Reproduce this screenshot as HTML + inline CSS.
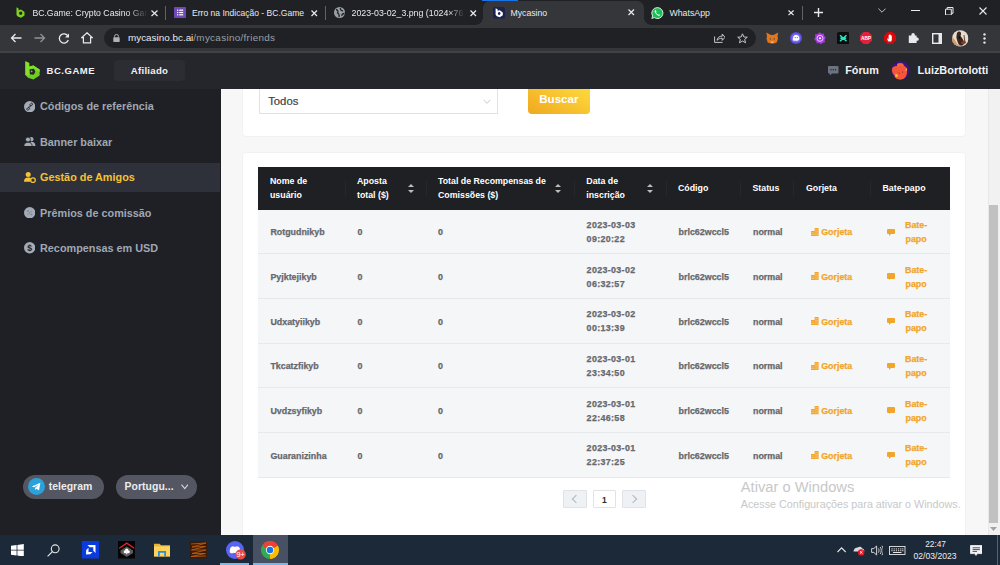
<!DOCTYPE html>
<html><head><meta charset="utf-8">
<style>
*{box-sizing:border-box;margin:0;padding:0}
html,body{width:1000px;height:565px;overflow:hidden;background:#f7f7f7;font-family:"Liberation Sans",sans-serif}
.abs{position:absolute}
.t{white-space:nowrap;position:absolute}
.card{position:absolute;background:#fff;border-radius:4px;border:1px solid #f1f1f1}
#sel{left:258.7px;top:70px;width:239.5px;height:43.5px;border:1px solid #e2e2e2;background:#fff}
#sel .tx{left:8.5px;top:22.6px;font-size:11.3px;color:#3b3f49;line-height:14px;-webkit-text-stroke:0.2px #3b3f49}
#btn{left:528px;top:70px;width:62.2px;height:43.8px;border-radius:4px;background:linear-gradient(30deg,#f0a81f 0%,#fbcf37 60%,#ffe14b 100%)}
#btn .tx{left:11.2px;top:22.4px;font-size:11.6px;font-weight:700;color:#fff;line-height:14px}
#thd{left:258px;top:167.3px;width:691.6px;height:42.3px;background:#1f2024}
#thd .h{position:absolute;color:#fff;font-size:8.8px;font-weight:700;line-height:14px;white-space:nowrap}
#thd .sep{position:absolute;top:14px;width:1px;height:14.5px;background:#27282d}
.sort{position:absolute;top:16.7px;width:6px;height:9.5px}
.sort:before{content:"";position:absolute;left:0;top:0;border-left:3px solid transparent;border-right:3px solid transparent;border-bottom:3.6px solid #bdbdbd}
.sort:after{content:"";position:absolute;left:0;top:5.6px;border-left:3px solid transparent;border-right:3px solid transparent;border-top:3.8px solid #bdbdbd}
.row{position:absolute;left:258px;width:691.6px;height:44.68px;background:#f5f6f8;border-bottom:1px solid #e8e9ed}
.row .c{position:absolute;top:15.7px;font-size:8.9px;font-weight:700;color:#66686d;line-height:14px;white-space:nowrap;-webkit-text-stroke:0.25px currentColor}
.row .nm{left:12.4px}
.row .z1{left:99.4px}
.row .z2{left:180px}
.row .dt{left:328.6px;top:8.3px;letter-spacing:0.35px}
.row .cd{left:420.6px}
.row .st{left:495px}
.row .gj{left:553px;color:#f2a52b}
.row .bp{left:629.4px;top:8.3px;color:#f2a52b}
.gi{display:inline-block;position:relative;width:7.6px;height:8.2px;margin-right:2.6px;vertical-align:-0.5px}
.bi{position:absolute;left:0;top:10.7px;width:7.6px;height:5.4px;background:#f2a52b;border-radius:1px}
.bi:after{content:"";position:absolute;left:1.4px;top:5.2px;border-left:2px solid #f2a52b;border-right:2px solid transparent;border-bottom:2px solid transparent}
.bp b{position:absolute;left:16.2px;top:0;text-align:center;font-weight:700;width:25px}
.pg{position:absolute;top:490.2px;width:23.5px;height:17.6px;border:1px solid #dfe3e8;border-radius:1px;background:#eef2f5}
.pg.cur{background:#fff;border-color:#e3e3e3}
.pg .ch{position:absolute;left:8.5px;top:5px;width:6px;height:6px;border-left:1px solid #b2b7bd;border-bottom:1px solid #b2b7bd;transform:rotate(45deg)}
.pg .ch.r{transform:rotate(-135deg);left:6.5px}
.wm1{left:740.8px;top:478px;font-size:14.7px;color:#c8c8c8;line-height:18px}
.wm2{left:740.8px;top:496.6px;font-size:10.75px;color:#c8c8c8;line-height:14px}
</style></head><body>

<div class="card" style="left:242px;top:40px;width:723.6px;height:96.6px"></div>
<div id="sel" class="abs"><span class="t tx">Todos</span>
<svg class="abs" style="left:223.5px;top:27.5px" width="8" height="6" viewBox="0 0 8 6"><path d="M0.6 0.8 L4 4.4 L7.4 0.8" fill="none" stroke="#c9c9c9" stroke-width="1"/></svg></div>
<div id="btn" class="abs"><span class="t tx">Buscar</span></div>
<div class="card" style="left:242px;top:151.9px;width:723.6px;height:420px"></div>
<div id="thd" class="abs">
<span class="h" style="left:12px;top:6.8px">Nome de<br>usuário</span>
<span class="sep" style="left:87px"></span>
<span class="h" style="left:99px;top:6.8px">Aposta<br>total ($)</span>
<span class="sort" style="left:149.6px"></span>
<span class="sep" style="left:168px"></span>
<span class="h" style="left:180px;top:6.8px">Total de Recompensas de<br>Comissões ($)</span>
<span class="sort" style="left:297px"></span>
<span class="sep" style="left:316px"></span>
<span class="h" style="left:328.3px;top:6.8px">Data de<br>inscrição</span>
<span class="sort" style="left:389px"></span>
<span class="sep" style="left:408px"></span>
<span class="h" style="left:420px;top:14px">Código</span>
<span class="sep" style="left:482px"></span>
<span class="h" style="left:494.5px;top:14px">Status</span>
<span class="sep" style="left:535px"></span>
<span class="h" style="left:548px;top:14px">Gorjeta</span>
<span class="sep" style="left:612px"></span>
<span class="h" style="left:624.5px;top:14px">Bate-papo</span>
</div>
<div class="row" style="top:209.60px"><span class="c nm">Rotgudnikyb</span><span class="c z1">0</span><span class="c z2">0</span><span class="c dt">2023-03-03<br>09:20:22</span><span class="c cd">brlc62wccl5</span><span class="c st">normal</span><span class="c gj"><svg class="gi" width="7.6" height="8.2" viewBox="0 0 7.6 8.2"><path d="M0 3 H4 V8.2 H0 Z M3.6 0 H7.6 V8.2 H3.6 Z" fill="#f2a52b"/><path d="M0 4.8 H3.6 M0 6.5 H3.6 M4 1.7 H7.6 M4 3.4 H7.6 M4 5.1 H7.6 M4 6.8 H7.6" stroke="#f9d9a6" stroke-width="0.5"/></svg>Gorjeta</span><span class="c bp"><i class="bi"></i><b>Bate-<br>papo</b></span></div>
<div class="row" style="top:254.28px"><span class="c nm">Pyjktejikyb</span><span class="c z1">0</span><span class="c z2">0</span><span class="c dt">2023-03-02<br>06:32:57</span><span class="c cd">brlc62wccl5</span><span class="c st">normal</span><span class="c gj"><svg class="gi" width="7.6" height="8.2" viewBox="0 0 7.6 8.2"><path d="M0 3 H4 V8.2 H0 Z M3.6 0 H7.6 V8.2 H3.6 Z" fill="#f2a52b"/><path d="M0 4.8 H3.6 M0 6.5 H3.6 M4 1.7 H7.6 M4 3.4 H7.6 M4 5.1 H7.6 M4 6.8 H7.6" stroke="#f9d9a6" stroke-width="0.5"/></svg>Gorjeta</span><span class="c bp"><i class="bi"></i><b>Bate-<br>papo</b></span></div>
<div class="row" style="top:298.96px"><span class="c nm">Udxatyiikyb</span><span class="c z1">0</span><span class="c z2">0</span><span class="c dt">2023-03-02<br>00:13:39</span><span class="c cd">brlc62wccl5</span><span class="c st">normal</span><span class="c gj"><svg class="gi" width="7.6" height="8.2" viewBox="0 0 7.6 8.2"><path d="M0 3 H4 V8.2 H0 Z M3.6 0 H7.6 V8.2 H3.6 Z" fill="#f2a52b"/><path d="M0 4.8 H3.6 M0 6.5 H3.6 M4 1.7 H7.6 M4 3.4 H7.6 M4 5.1 H7.6 M4 6.8 H7.6" stroke="#f9d9a6" stroke-width="0.5"/></svg>Gorjeta</span><span class="c bp"><i class="bi"></i><b>Bate-<br>papo</b></span></div>
<div class="row" style="top:343.64px"><span class="c nm">Tkcatzfikyb</span><span class="c z1">0</span><span class="c z2">0</span><span class="c dt">2023-03-01<br>23:34:50</span><span class="c cd">brlc62wccl5</span><span class="c st">normal</span><span class="c gj"><svg class="gi" width="7.6" height="8.2" viewBox="0 0 7.6 8.2"><path d="M0 3 H4 V8.2 H0 Z M3.6 0 H7.6 V8.2 H3.6 Z" fill="#f2a52b"/><path d="M0 4.8 H3.6 M0 6.5 H3.6 M4 1.7 H7.6 M4 3.4 H7.6 M4 5.1 H7.6 M4 6.8 H7.6" stroke="#f9d9a6" stroke-width="0.5"/></svg>Gorjeta</span><span class="c bp"><i class="bi"></i><b>Bate-<br>papo</b></span></div>
<div class="row" style="top:388.32px"><span class="c nm">Uvdzsyfikyb</span><span class="c z1">0</span><span class="c z2">0</span><span class="c dt">2023-03-01<br>22:46:58</span><span class="c cd">brlc62wccl5</span><span class="c st">normal</span><span class="c gj"><svg class="gi" width="7.6" height="8.2" viewBox="0 0 7.6 8.2"><path d="M0 3 H4 V8.2 H0 Z M3.6 0 H7.6 V8.2 H3.6 Z" fill="#f2a52b"/><path d="M0 4.8 H3.6 M0 6.5 H3.6 M4 1.7 H7.6 M4 3.4 H7.6 M4 5.1 H7.6 M4 6.8 H7.6" stroke="#f9d9a6" stroke-width="0.5"/></svg>Gorjeta</span><span class="c bp"><i class="bi"></i><b>Bate-<br>papo</b></span></div>
<div class="row" style="top:433.00px"><span class="c nm">Guaranizinha</span><span class="c z1">0</span><span class="c z2">0</span><span class="c dt">2023-03-01<br>22:37:25</span><span class="c cd">brlc62wccl5</span><span class="c st">normal</span><span class="c gj"><svg class="gi" width="7.6" height="8.2" viewBox="0 0 7.6 8.2"><path d="M0 3 H4 V8.2 H0 Z M3.6 0 H7.6 V8.2 H3.6 Z" fill="#f2a52b"/><path d="M0 4.8 H3.6 M0 6.5 H3.6 M4 1.7 H7.6 M4 3.4 H7.6 M4 5.1 H7.6 M4 6.8 H7.6" stroke="#f9d9a6" stroke-width="0.5"/></svg>Gorjeta</span><span class="c bp"><i class="bi"></i><b>Bate-<br>papo</b></span></div>
<div class="pg" style="left:563.2px"><i class="ch"></i></div>
<div class="pg cur" style="left:592.6px"><span class="t" style="left:0;width:21.5px;text-align:center;top:1.5px;font-size:8.5px;font-weight:700;color:#2b2b2b;line-height:14px">1</span></div>
<div class="pg" style="left:622px"><i class="ch r"></i></div>
<span class="t wm1">Ativar o Windows</span>
<span class="t wm2">Acesse Configurações para ativar o Windows.</span>

<div class="abs" style="left:987.7px;top:88.5px;width:12.3px;height:447.5px;background:#f1f1f1;border-left:1px solid #e9e9e9"></div>
<div class="abs" style="left:989.2px;top:205px;width:9px;height:318px;background:#c1c1c1"></div>
<svg class="abs" style="left:990px;top:527px" width="7" height="4" viewBox="0 0 7 4"><path d="M0 0H7L3.5 4Z" fill="#a3a3a3"/></svg>
<div class="abs" style="left:0;top:0;width:1000px;height:25px;background:#202124"></div>
<div class="abs" style="left:483px;top:1px;width:160.5px;height:24.5px;background:#35363a;border-radius:7px 7px 0 0"></div>
<div class="abs" style="left:476px;top:18px;width:7px;height:7px;background:radial-gradient(circle at 0 0,#202124 6.5px,#35363a 7px)"></div>
<div class="abs" style="left:644px;top:18px;width:7px;height:7px;background:radial-gradient(circle at 100% 0,#202124 6.5px,#35363a 7px)"></div>
<div class="abs" style="left:482.4px;top:0;width:35.2px;height:1.3px;background:#1a73e8"></div>
<svg class="abs" style="left:16px;top:7px" width="9" height="11" viewBox="0 0 9 11"><path d="M0.5 0.3 L2.6 1.4 V3.3 L5 2.6 L8.5 5 V8.6 L5 10.7 L1.8 9.6 L0.5 8 Z" fill="#7ed321"/><path d="M3.2 5 L5.6 4.6 L6.4 6.6 L5.2 8 L3.3 7.6 Z" fill="#202124"/></svg>
<span class="t" style="left:32.40px;top:8.74px;font-size:8.7px;font-weight:400;color:#e8eaed;line-height:1;width:116px;padding-bottom:3px;overflow:hidden;-webkit-mask-image:linear-gradient(90deg,#000 82%,transparent)">BC.Game: Crypto Casino Gam</span>
<svg class="abs" style="left:151px;top:10px" width="7" height="6.5" viewBox="0 0 7 6.5"><path d="M0.5 0.5L6.5 6.0M6.5 0.5L0.5 6.0" stroke="#e8eaed" stroke-width="1.2" fill="none"/></svg>
<div class="abs" style="left:165.3px;top:5.5px;width:1px;height:14px;background:#5f6368"></div>
<svg class="abs" style="left:174px;top:7px" width="12" height="11" viewBox="0 0 12 11"><rect x="0" y="0" width="12" height="11" rx="1" fill="#7248b9"/><g fill="#fff"><rect x="3" y="2.6" width="1.3" height="1.2"/><rect x="5.2" y="2.6" width="4" height="1.2"/><rect x="3" y="4.9" width="1.3" height="1.2"/><rect x="5.2" y="4.9" width="4" height="1.2"/><rect x="3" y="7.2" width="1.3" height="1.2"/><rect x="5.2" y="7.2" width="4" height="1.2"/></g></svg>
<span class="t" style="left:192.00px;top:8.86px;font-size:8.55px;font-weight:400;color:#e8eaed;line-height:1;">Erro na Indicação - BC.Game</span>
<svg class="abs" style="left:311px;top:10px" width="6.5" height="6.5" viewBox="0 0 6.5 6.5"><path d="M0.5 0.5L6.0 6.0M6.0 0.5L0.5 6.0" stroke="#e8eaed" stroke-width="1.2" fill="none"/></svg>
<div class="abs" style="left:325px;top:5.5px;width:1px;height:14px;background:#5f6368"></div>
<svg class="abs" style="left:334px;top:7.2px" width="11" height="11" viewBox="0 0 11 11"><circle cx="5.5" cy="5.5" r="5.5" fill="#9aa0a6"/><path d="M2 2.5 C4 3 4.5 4.5 3.5 6 C5 6.5 5.5 7.5 5 10 M6.5 1 C6 2.5 7 3.5 9 4 M8 9 C7.5 7.5 8.5 6.5 10.5 6.5" stroke="#202124" stroke-width="1.3" fill="none"/></svg>
<span class="t" style="left:351.50px;top:8.65px;font-size:8.8px;font-weight:400;color:#e8eaed;line-height:1;width:113px;padding-bottom:3px;overflow:hidden;-webkit-mask-image:linear-gradient(90deg,#000 85%,transparent)">2023-03-02_3.png (1024×76</span>
<svg class="abs" style="left:470px;top:10px" width="6.5" height="6.5" viewBox="0 0 6.5 6.5"><path d="M0.5 0.5L6.0 6.0M6.0 0.5L0.5 6.0" stroke="#e8eaed" stroke-width="1.2" fill="none"/></svg>
<svg class="abs" style="left:492.5px;top:7px" width="12" height="11.5" viewBox="0 0 12 11.5"><rect width="12" height="11.5" rx="1.5" fill="#1b2250"/><path d="M2.6 1.2 L4.6 2.2 V3.8 L6.8 3.3 L9.8 5.4 V8.3 L6.8 10.2 L3.8 9.3 L2.6 7.8 Z" fill="#fff"/><path d="M4.9 5.4 L7 5.1 L7.6 6.8 L6.6 8 L5 7.6 Z" fill="#1b2250"/></svg>
<span class="t" style="left:510.50px;top:8.74px;font-size:8.7px;font-weight:400;color:#e8eaed;line-height:1;">Mycasino</span>
<svg class="abs" style="left:628.3px;top:9.4px" width="6.5" height="6.5" viewBox="0 0 6.5 6.5"><path d="M0.5 0.5L6.0 6.0M6.0 0.5L0.5 6.0" stroke="#e8eaed" stroke-width="1.2" fill="none"/></svg>
<svg class="abs" style="left:651px;top:7px" width="12.5" height="12" viewBox="0 0 12.5 12"><path d="M6.3 0.6 A5.5 5.5 0 1 1 3.3 10.6 L0.8 11.4 L1.6 9 A5.5 5.5 0 0 1 6.3 0.6 Z" fill="#1fbf58" stroke="#f0f0f0" stroke-width="0.9"/><path d="M4.2 3.2 C3.6 3.6 3.4 4.4 4 5.6 C4.8 7.2 6.2 8.4 7.6 8.8 C8.5 9 9 8.6 9.2 8 L8 7.2 L7.3 7.8 C6.4 7.4 5.4 6.5 5 5.6 L5.5 4.9 L4.9 3.3 Z" fill="#fff"/></svg>
<span class="t" style="left:669.40px;top:8.65px;font-size:8.8px;font-weight:400;color:#e8eaed;line-height:1;">WhatsApp</span>
<svg class="abs" style="left:787.5px;top:10.2px" width="6.100000000000023" height="5.600000000000001" viewBox="0 0 6.100000000000023 5.600000000000001"><path d="M0.5 0.5L5.600000000000023 5.100000000000001M5.600000000000023 0.5L0.5 5.100000000000001" stroke="#e8eaed" stroke-width="1.2" fill="none"/></svg>
<div class="abs" style="left:801.5px;top:6px;width:1px;height:14px;background:#5f6368"></div>
<svg class="abs" style="left:814px;top:8.4px" width="9" height="9" viewBox="0 0 9 9"><path d="M4.5 0V9M0 4.5H9" stroke="#e8eaed" stroke-width="1.4"/></svg>
<svg class="abs" style="left:877.5px;top:8px" width="8" height="5" viewBox="0 0 8 5"><path d="M0.4 0.6L4 4.2L7.6 0.6" stroke="#bdc1c6" stroke-width="1" fill="none"/></svg>
<div class="abs" style="left:911px;top:10px;width:8.5px;height:1px;background:#e8eaed"></div>
<svg class="abs" style="left:945px;top:6.5px" width="8.5" height="8.5" viewBox="0 0 8.5 8.5"><path d="M2.2 2.2 V0.5 H8 V6.3 H6.3 M0.5 2.2 H6.3 V8 H0.5 Z" stroke="#e8eaed" stroke-width="1" fill="none"/></svg>
<svg class="abs" style="left:979px;top:6.5px" width="8" height="8.0" viewBox="0 0 8 8.0"><path d="M0.5 0.5L7.5 7.5M7.5 0.5L0.5 7.5" stroke="#e8eaed" stroke-width="1.1" fill="none"/></svg>
<div class="abs" style="left:0;top:25px;width:1000px;height:26px;background:#35363a"></div>
<div class="abs" style="left:0;top:50.8px;width:1000px;height:2.1px;background:#414246"></div>
<svg class="abs" style="left:10px;top:33px" width="12" height="10" viewBox="0 0 12 10"><path d="M11.5 5H1.5M5.5 1L1.5 5L5.5 9" stroke="#e8eaed" stroke-width="1.3" fill="none"/></svg>
<svg class="abs" style="left:33.5px;top:33px" width="12" height="10" viewBox="0 0 12 10"><path d="M0.5 5H10.5M6.5 1L10.5 5L6.5 9" stroke="#909396" stroke-width="1.3" fill="none"/></svg>
<svg class="abs" style="left:57.5px;top:32.5px" width="12" height="11" viewBox="0 0 12 11"><path d="M10 3.2 A4.6 4.6 0 1 0 10.3 7" stroke="#e8eaed" stroke-width="1.3" fill="none"/><path d="M11 0.6 V4.6 H7 Z" fill="#e8eaed"/></svg>
<svg class="abs" style="left:80.5px;top:32px" width="12" height="11.5" viewBox="0 0 12 11.5"><path d="M6 0.8 L11.2 5.6 H9.6 V10.8 H2.4 V5.6 H0.8 Z" stroke="#e8eaed" stroke-width="1.2" fill="none" stroke-linejoin="miter"/></svg>
<div class="abs" style="left:103.5px;top:27.8px;width:652px;height:20.2px;background:#202124;border-radius:10.1px"></div>
<svg class="abs" style="left:113px;top:33.5px" width="7" height="8" viewBox="0 0 7 8"><path d="M1.6 3.4 V2.3 A1.9 1.9 0 0 1 5.4 2.3 V3.4" stroke="#aeb1b5" stroke-width="1" fill="none"/><rect x="0.3" y="3.3" width="6.4" height="4.6" rx="0.6" fill="#aeb1b5"/></svg>
<span class="t" style="left:128.00px;top:33.42px;font-size:9.9px;font-weight:400;color:#e8eaed;line-height:1;">mycasino.bc.ai<span style="color:#9aa0a6;letter-spacing:0.3px">/mycasino/friends</span></span>
<svg class="abs" style="left:713.5px;top:33px" width="11.5" height="10" viewBox="0 0 11.5 10"><path d="M0.6 3.5 V9.4 H8.5 M3 7.3 C3.3 4.5 5.5 3.2 8.2 3.2 V1 L11 4.3 L8.2 7.4 V5.2 C6 5.2 4.3 6 3 7.3 Z" stroke="#c4c7ca" stroke-width="1" fill="none" stroke-linejoin="round"/></svg>
<svg class="abs" style="left:737px;top:32.5px" width="11" height="11" viewBox="0 0 11 11"><path d="M5.5 0.8 L6.9 4 L10.3 4.2 L7.7 6.4 L8.5 9.8 L5.5 8 L2.5 9.8 L3.3 6.4 L0.7 4.2 L4.1 4 Z" stroke="#c4c7c5" stroke-width="1" fill="none" stroke-linejoin="round"/></svg>
<svg class="abs" style="left:766px;top:32px" width="12.5" height="12" viewBox="0 0 12.5 12"><path d="M0.3 0.5 L5 3 H7.5 L12.2 0.5 L11.5 4.5 L12 6.5 L10.8 10.5 L7.8 11.5 H4.7 L1.7 10.5 L0.5 6.5 L1 4.5 Z" fill="#e2761b"/><path d="M3.5 6 L5.2 7 L4.4 7.8 Z M9 6 L7.3 7 L8.1 7.8 Z" fill="#233447"/><path d="M4.8 9.6 H7.7 L7.2 11 H5.3 Z" fill="#d7c1b3"/></svg>
<svg class="abs" style="left:789.5px;top:32.2px" width="12" height="12" viewBox="0 0 12 12"><circle cx="6" cy="6" r="6" fill="#5b4be0"/><circle cx="6" cy="6" r="4.6" fill="#7c6cf2"/><path d="M2.8 8.4 C2.8 4.5 3.8 3 6 3 C8.2 3 9.4 4.5 9.4 6.5 C9.4 8 8.2 8.8 6 8.8 Z" fill="#fff"/><circle cx="5.2" cy="5.6" r="0.6" fill="#5b4be0"/><circle cx="7.3" cy="5.6" r="0.6" fill="#5b4be0"/></svg>
<svg class="abs" style="left:813.5px;top:32px" width="12" height="12.5" viewBox="0 0 12 12.5"><path d="M6 0.3 L7.4 1.8 L9.8 1.6 L10.2 3.8 L11.8 5.8 L10.6 7.8 L11 10.2 L8.8 10.8 L7 12.3 L5.2 11 L2.8 11.2 L2 9 L0.2 7.2 L1.4 5 L1 2.6 L3.4 2 Z" fill="#a53ce0"/><circle cx="6" cy="6.3" r="3" fill="none" stroke="#e9c7ff" stroke-width="1"/><circle cx="6" cy="6.3" r="1" fill="#fff"/></svg>
<svg class="abs" style="left:836.8px;top:31.8px" width="12.5" height="12.5" viewBox="0 0 12.5 12.5"><rect width="12.5" height="12.5" rx="2" fill="#0d0d0d"/><path d="M3 3.2 L6.25 6.25 L3 9.3 M9.5 3.2 L6.25 6.25 L9.5 9.3 M3.3 6.25 H9.2" stroke="#2ce1c4" stroke-width="1.5" fill="none"/></svg>
<svg class="abs" style="left:860.2px;top:32.2px" width="12" height="12" viewBox="0 0 12 12"><path d="M3.5 0 H8.5 L12 3.5 V8.5 L8.5 12 H3.5 L0 8.5 V3.5 Z" fill="#e41f3a"/><text x="6" y="8" font-family="Liberation Sans" font-size="4.8" font-weight="700" fill="#fff" text-anchor="middle">ABP</text></svg>
<svg class="abs" style="left:883.7px;top:32.2px" width="12" height="12" viewBox="0 0 12 12"><path d="M3.5 0 H8.5 L12 3.5 V8.5 L8.5 12 H3.5 L0 8.5 V3.5 Z" fill="#d60a0a"/><path d="M4.4 9.4 C3.6 8.4 3.2 7.2 3.4 6.4 L3.9 6.3 L4.6 7.2 V3.4 C4.6 3 5.4 3 5.4 3.4 V2.5 C5.4 2.1 6.2 2.1 6.2 2.5 V3 C6.2 2.6 7 2.6 7 3 V3.7 C7 3.3 7.8 3.3 7.8 3.7 V7.4 C7.8 8.4 7.4 9 7 9.4 Z" fill="#fff"/></svg>
<svg class="abs" style="left:907.7px;top:32.2px" width="11.5" height="11.5" viewBox="0 0 11.5 11.5"><path d="M0.8 3.6 H3.4 V2.6 A1.7 1.7 0 0 1 6.8 2.6 V3.6 H8.6 V5.6 H9.2 A1.6 1.6 0 0 1 9.2 8.8 H8.6 V11 H0.8 Z" fill="#e8eaed"/></svg>
<svg class="abs" style="left:931.7px;top:32.5px" width="10.5" height="11" viewBox="0 0 10.5 11"><rect x="0.7" y="0.7" width="9.1" height="9.6" fill="none" stroke="#e8eaed" stroke-width="1.4"/><rect x="6.5" y="0.7" width="3.3" height="9.6" fill="#e8eaed"/></svg>
<svg class="abs" style="left:952px;top:30px" width="16.5" height="17" viewBox="0 0 16.5 17"><defs><clipPath id="pa"><circle cx="8.25" cy="8.4" r="8.2"/></clipPath></defs><g clip-path="url(#pa)"><rect width="16.5" height="17" fill="#e9ddd0"/><path d="M0 7 C2 8 3 10 4 12 C5 14 6 15 8 15 L6 17 H0 Z" fill="#d29a66"/><path d="M5 3 C5.5 1.5 7.5 1 8.5 2 C9.5 3 9 5 8.5 6 C9.5 7 11 9 12.5 13 C12 15 10 16 8 15.5 C6.5 14.5 5.5 12 5 10 C4 8 4.5 5 5 3 Z" fill="#3a2820"/><path d="M6.5 6.5 C7.5 6 8.5 7 8.2 8 L7 9 Z" fill="#0f0b0a"/><path d="M11.5 5 L12.5 5 L13.5 13 L12.5 14 Z" fill="#6b4a38"/><path d="M9 12 L13 10.5 L14 13 L10 14.5 Z" fill="#8a3a22"/></g></svg>
<svg class="abs" style="left:982.5px;top:33px" width="3" height="11" viewBox="0 0 3 11"><circle cx="1.5" cy="1.4" r="1.2" fill="#e8eaed"/><circle cx="1.5" cy="5.5" r="1.2" fill="#e8eaed"/><circle cx="1.5" cy="9.6" r="1.2" fill="#e8eaed"/></svg>
<div class="abs" style="left:0;top:52.9px;width:1000px;height:36.1px;background:#24262b"></div>
<svg class="abs" style="left:24.8px;top:60.8px" width="15" height="19" viewBox="0 0 15 19"><path d="M0.4 0.2 L4.2 2 V5.4 L8.4 4.6 L14.6 8.4 V14.6 L8.4 18.6 L3 16.8 L0.4 14 Z" fill="#6fcf1f"/><path d="M0.4 0.2 L4.2 2 V5.4 L8.4 4.6 L14.6 8.4 V11 L8 7.2 L4.2 8 V14.6 L0.4 14 Z" fill="#83e02b"/><path d="M4.6 8.6 L9 7.8 L10.4 11 L8.6 13.8 L5 13.2 Z" fill="#24262b"/><circle cx="6.6" cy="10.4" r="0.9" fill="#6fcf1f"/></svg>
<span class="t" style="left:46.50px;top:65.86px;font-size:9.5px;font-weight:700;color:#f2f2f2;line-height:1;letter-spacing:0.55px">BC.GAME</span>
<div class="abs" style="left:113.6px;top:60px;width:71px;height:20.6px;background:#2b2d33;border-radius:4px"></div>
<span class="t" style="left:130.70px;top:66.47px;font-size:9.6px;font-weight:700;color:#f2f2f2;line-height:1;letter-spacing:0.3px">Afiliado</span>
<svg class="abs" style="left:828px;top:66px" width="10.5" height="10" viewBox="0 0 10.5 10"><path d="M0 0.8 C0 0.3 0.3 0 0.8 0 H9.7 C10.2 0 10.5 0.3 10.5 0.8 V6.6 C10.5 7.1 10.2 7.4 9.7 7.4 H4 L1.8 9.6 V7.4 H0.8 C0.3 7.4 0 7.1 0 6.6 Z" fill="#6c7380"/><g fill="#24262b"><circle cx="3" cy="3.7" r="0.7"/><circle cx="5.25" cy="3.7" r="0.7"/><circle cx="7.5" cy="3.7" r="0.7"/></g></svg>
<span class="t" style="left:845.20px;top:64.76px;font-size:10.8px;font-weight:700;color:#f2f2f2;line-height:1;">Fórum</span>
<svg class="abs" style="left:891.2px;top:61.2px" width="19" height="19" viewBox="0 0 19 19"><defs><clipPath id="av"><circle cx="9.5" cy="9.5" r="9.3"/></clipPath></defs><circle cx="9.5" cy="9.5" r="9.3" fill="#3b1583"/><g clip-path="url(#av)"><path d="M1 8 C1.5 5.5 4 4.8 6 5 C6 3 7.5 1.8 9 2.2 C10.5 1.6 12.5 2.5 12.5 4.5 C15 5.5 16.5 8 16 11 C16 14.5 14 18 10 19 C6 19.5 3.5 17.5 3.5 14.5 C2 13 0.6 10.5 1 8 Z" fill="#f4553b"/><circle cx="7.6" cy="4" r="1.6" fill="#f26a3f"/><circle cx="11" cy="4" r="1.6" fill="#f26a3f"/><path d="M4 13.5 C5 12.5 6.5 13 7 14.5 C6.8 16 5.2 16.6 4.3 15.6 Z" fill="#f6b928"/><path d="M15 6.5 L16.2 8.8 L14.5 10.5 Z" fill="#f6b928"/><circle cx="8.2" cy="12" r="0.6" fill="#7a2514"/><circle cx="11.6" cy="11" r="0.6" fill="#7a2514"/></g></svg>
<span class="t" style="left:917.60px;top:64.67px;font-size:10.9px;font-weight:700;color:#f2f2f2;line-height:1;">LuizBortolotti</span>
<div class="abs" style="left:0;top:88.5px;width:220.5px;height:447.5px;background:#1f2025"></div>
<div class="abs" style="left:0;top:162.5px;width:220px;height:29.3px;background:#2e3139"></div>
<svg class="abs" style="left:24px;top:100.8px" width="11.4" height="11.4" viewBox="0 0 11.4 11.4"><circle cx="5.7" cy="5.7" r="5.7" fill="#a3abb7"/><path d="M3.6 7.8 L7.8 3.6" stroke="#1f2025" stroke-width="0.9"/><rect x="5.6" y="2.6" width="3.2" height="2" rx="1" transform="rotate(-45 7.2 3.6)" fill="none" stroke="#1f2025" stroke-width="0.8"/><rect x="2.6" y="6.8" width="3.2" height="2" rx="1" transform="rotate(-45 4.2 7.8)" fill="none" stroke="#1f2025" stroke-width="0.8"/></svg>
<svg class="abs" style="left:24px;top:136.6px" width="11.5" height="9.6" viewBox="0 0 11.5 9.6"><circle cx="7.4" cy="2.2" r="2.1" fill="#a3abb7"/><path d="M5 9.6 C5 6.2 6.2 4.8 7.6 4.8 C9.8 4.8 11.5 6.2 11.5 9.6 Z" fill="#a3abb7"/><circle cx="4" cy="2.6" r="2.5" fill="#a3abb7" stroke="#1f2025" stroke-width="0.8"/><path d="M-0.2 9.8 C-0.2 6.6 1.4 5.2 4 5.2 C6.6 5.2 8.2 6.6 8.2 9.8 Z" fill="#a3abb7" stroke="#1f2025" stroke-width="0.8"/></svg>
<svg class="abs" style="left:24.2px;top:171.7px" width="12" height="11" viewBox="0 0 12 11"><circle cx="4.2" cy="2.6" r="2.5" fill="#f5c233"/><path d="M0 9.8 C0 6.8 1.6 5.6 4.2 5.6 C5.6 5.6 6.4 6 7 6.4 C6.4 7.2 6.3 8.6 6.8 9.8 Z" fill="#f5c233"/><circle cx="9" cy="8.2" r="2.3" fill="none" stroke="#f5c233" stroke-width="1.3"/></svg>
<svg class="abs" style="left:24px;top:207px" width="11.4" height="11.4" viewBox="0 0 11.4 11.4"><circle cx="5.7" cy="5.7" r="5.7" fill="#a3abb7"/><path d="M3.6 7.8 L7.8 3.6" stroke="#7d8590" stroke-width="1"/><circle cx="4" cy="4" r="0.9" fill="#7d8590"/><circle cx="7.4" cy="7.4" r="0.9" fill="#7d8590"/></svg>
<svg class="abs" style="left:24px;top:242.2px" width="11.4" height="11.4" viewBox="0 0 11.4 11.4"><circle cx="5.7" cy="5.7" r="5.7" fill="#a3abb7"/><text x="5.7" y="8.9" font-family="Liberation Sans" font-size="8.6" font-weight="700" fill="#1f2025" text-anchor="middle">$</text></svg>
<span class="t" style="left:40.00px;top:101.42px;font-size:10.85px;font-weight:700;color:#9fa7b3;line-height:1;">Códigos de referência</span>
<span class="t" style="left:40.00px;top:137.02px;font-size:10.85px;font-weight:700;color:#9fa7b3;line-height:1;">Banner baixar</span>
<span class="t" style="left:40.00px;top:171.82px;font-size:10.85px;font-weight:700;color:#f5c233;line-height:1;">Gestão de Amigos</span>
<span class="t" style="left:40.00px;top:207.52px;font-size:10.85px;font-weight:700;color:#9fa7b3;line-height:1;">Prêmios de comissão</span>
<span class="t" style="left:40.00px;top:242.82px;font-size:10.85px;font-weight:700;color:#9fa7b3;line-height:1;">Recompensas em USD</span>
<div class="abs" style="left:23.3px;top:475px;width:81.2px;height:23.8px;border-radius:12px;background:#545761"></div>
<svg class="abs" style="left:27.5px;top:478.4px" width="17" height="17" viewBox="0 0 17 17"><circle cx="8.5" cy="8.5" r="8.5" fill="#2aa1dc"/><path d="M3.8 8.4 L12.4 4.8 L11 12.4 L8.6 10.8 L7.2 12 L7.1 9.9 L10.8 6.4 L6.2 9.3 Z" fill="#fff"/></svg>
<span class="t" style="left:48.75px;top:481.75px;font-size:10.45px;font-weight:700;color:#ececec;line-height:1;">telegram</span>
<div class="abs" style="left:115.8px;top:475px;width:81.2px;height:23.8px;border-radius:12px;background:#545761"></div>
<span class="t" style="left:124.50px;top:481.75px;font-size:10.45px;font-weight:700;color:#ececec;line-height:1;letter-spacing:0.05px">Portugu...</span>
<svg class="abs" style="left:180.5px;top:484px" width="7.5" height="5.5" viewBox="0 0 7.5 5.5"><path d="M0.5 0.6L3.75 4.6L7 0.6" stroke="#d4d4d4" stroke-width="1.2" fill="none"/></svg>
<div class="abs" style="left:0;top:535px;width:1000px;height:30px;background:#1c2939"></div>
<svg class="abs" style="left:11.2px;top:543.8px" width="12.8" height="12.5" viewBox="0 0 12.8 12.5"><path d="M0 1.8 L5.6 1 V5.8 H0 Z M6.4 0.9 L12.8 0 V5.8 H6.4 Z M0 6.6 H5.6 V11.5 L0 10.7 Z M6.4 6.6 H12.8 V12.5 L6.4 11.6 Z" fill="#fff"/></svg>
<svg class="abs" style="left:46.5px;top:543.6px" width="13" height="13" viewBox="0 0 13 13"><circle cx="8.2" cy="4.8" r="3.9" fill="none" stroke="#e6e6e6" stroke-width="1.1"/><path d="M5.4 7.6 L0.6 12.4" stroke="#e6e6e6" stroke-width="1.2"/></svg>
<svg class="abs" style="left:81.7px;top:541.2px" width="17.5" height="17.5" viewBox="0 0 17.5 17.5"><rect width="17.5" height="17.5" fill="#0a3be0"/><path d="M5.5 4 H13.5 V12 L11.3 9.8 V6.2 H7.7 Z M4 13.5 L4.2 9 L6.5 6.7 V11 H10.6 L8.3 13.3 Z" fill="#fff"/></svg>
<svg class="abs" style="left:117.7px;top:541.2px" width="17.5" height="17.5" viewBox="0 0 17.5 17.5"><rect width="17.5" height="17.5" fill="#050505"/><path d="M1.2 6.4 L8.75 1.2 L16.3 6.4 V8 L8.75 3 L1.2 8 Z" fill="#e3202b"/><path d="M2.5 9.5 L8.75 5.6 L15 9.5 L15 12 L8.75 16 L2.5 12 Z" fill="#5b5b5b"/><circle cx="8.75" cy="9" r="1.6" fill="#fff"/><circle cx="7.2" cy="10.8" r="1.5" fill="#fff"/><circle cx="10.3" cy="10.8" r="1.5" fill="#fff"/><rect x="8.2" y="10.5" width="1.1" height="2.8" fill="#fff"/></svg>
<svg class="abs" style="left:154.2px;top:543px" width="16" height="14" viewBox="0 0 16 14"><path d="M0 0.8 H5.6 L7 2.2 H16 V13.4 H0 Z" fill="#e8b43a"/><rect x="0" y="3.4" width="16" height="10" fill="#ffd35c"/><path d="M4 8 H12 V13.4 H10.2 V9.8 H5.8 V13.4 H4 Z" fill="#2a8ce0"/></svg>
<svg class="abs" style="left:190.2px;top:541.2px" width="17.3" height="17.5" viewBox="0 0 17.3 17.5"><rect width="17.3" height="17.5" rx="1.5" fill="#3a1a08"/><path d="M1 3 L16 2 L2 6 L15.5 5.5 L1.5 9 L16 9 L2 12.5 L15.5 12.5 L1 15.5 L16 15" stroke="#c8620f" stroke-width="0.8" fill="none"/></svg>
<svg class="abs" style="left:225.5px;top:541.4px" width="22" height="19" viewBox="0 0 22 19"><circle cx="9" cy="9" r="9" fill="#5865f2"/><path d="M4.8 6.2 C5.6 5.6 6.6 5.3 7.4 5.2 L7.7 5.8 C8.6 5.7 9.4 5.7 10.3 5.8 L10.6 5.2 C11.4 5.3 12.4 5.6 13.2 6.2 C14.2 7.8 14.4 9.6 14.2 11.4 C13.4 12 12.5 12.4 11.6 12.6 L11 11.8 C9.7 12.2 8.3 12.2 7 11.8 L6.4 12.6 C5.5 12.4 4.6 12 3.8 11.4 C3.6 9.6 3.8 7.8 4.8 6.2 Z" fill="#fff"/><circle cx="14.6" cy="13.4" r="5.2" fill="#e84a4a"/><text x="14.5" y="16.1" font-family="Liberation Sans" font-size="7.2" fill="#fff" text-anchor="middle">9+</text></svg>
<div class="abs" style="left:220.2px;top:563.4px;width:28.5px;height:1.6px;background:#76b9ed"></div>
<div class="abs" style="left:253px;top:535px;width:35.2px;height:30px;background:#475163"></div>
<div class="abs" style="left:253px;top:563.4px;width:35.2px;height:1.6px;background:#76b9ed"></div>
<svg class="abs" style="left:261.3px;top:541.1px" width="18" height="18" viewBox="-1 -1 2 2"><path d="M0 0 L0 -1 A1 1 0 0 1 0.866 0.5 Z" fill="#ea4335" transform="rotate(-60)"/><path d="M0 0 L0.866 -0.5 A1 1 0 0 1 0 1 Z" fill="#fbbc04" transform="rotate(0)"/><path d="M0 0 L0 1 A1 1 0 0 1 -0.866 -0.5 Z" fill="#34a853"/><path d="M0 0 L-0.866 -0.5 A1 1 0 0 1 0.866 -0.5 Z" fill="#ea4335"/><circle r="0.46" fill="#fff"/><circle r="0.36" fill="#1a73e8"/></svg>
<svg class="abs" style="left:837.2px;top:547px" width="9.2" height="5.5" viewBox="0 0 9.2 5.5"><path d="M0.5 5 L4.6 0.8 L8.7 5" stroke="#e6e6e6" stroke-width="1.1" fill="none"/></svg>
<svg class="abs" style="left:853.3px;top:545px" width="12" height="11" viewBox="0 0 12 11"><path d="M0.5 6.5 C0.5 4 2.5 2.4 4.8 2.4 C6.2 1.2 8.6 1.6 9.2 3.6 C10.8 3.8 11.5 5 11.3 6.6 Z" fill="#d9d9d9"/><circle cx="8.2" cy="7.4" r="3.2" fill="#e81123"/><path d="M6.9 6.1 L9.5 8.7 M9.5 6.1 L6.9 8.7" stroke="#fff" stroke-width="0.9"/></svg>
<svg class="abs" style="left:870.9px;top:544.5px" width="12.5" height="11" viewBox="0 0 12.5 11"><path d="M0.6 3.6 H2.8 L5.6 1 V10 L2.8 7.4 H0.6 Z" stroke="#e6e6e6" stroke-width="0.9" fill="none"/><path d="M7.4 3.4 C8.2 4.4 8.2 6.6 7.4 7.6 M9.2 2 C10.6 3.6 10.6 7.4 9.2 9 M11 0.8 C12.8 3 12.8 8 11 10.2" stroke="#e6e6e6" stroke-width="0.9" fill="none"/></svg>
<svg class="abs" style="left:889.4px;top:545.5px" width="16.5" height="9" viewBox="0 0 16.5 9"><rect x="0.5" y="0.5" width="15.5" height="8" fill="none" stroke="#e6e6e6" stroke-width="0.9"/><g fill="#e6e6e6"><rect x="2.4" y="2.4" width="1.2" height="1"/><rect x="4.6" y="2.4" width="1.2" height="1"/><rect x="6.8" y="2.4" width="1.2" height="1"/><rect x="9" y="2.4" width="1.2" height="1"/><rect x="11.2" y="2.4" width="1.2" height="1"/><rect x="13.2" y="2.4" width="1.2" height="1"/><rect x="2.4" y="4.2" width="1.2" height="1"/><rect x="4.6" y="4.2" width="1.2" height="1"/><rect x="6.8" y="4.2" width="1.2" height="1"/><rect x="9" y="4.2" width="1.2" height="1"/><rect x="11.2" y="4.2" width="1.2" height="1"/><rect x="13.2" y="4.2" width="1.2" height="1"/><rect x="4" y="6" width="8.5" height="1"/></g></svg>
<span class="t" style="left:925.20px;top:540.17px;font-size:8.3px;font-weight:400;color:#ececec;line-height:1;">22:47</span>
<span class="t" style="left:913.50px;top:552.42px;font-size:8.6px;font-weight:400;color:#ececec;line-height:1;">02/03/2023</span>
<svg class="abs" style="left:969.7px;top:544.8px" width="12.5" height="12" viewBox="0 0 12.5 12"><path d="M0.5 0.5 H12 V8.6 H7.4 L6 10.4 L4.6 8.6 H0.5 Z" fill="#f2f2f2" stroke="#f2f2f2" stroke-width="0.8"/><path d="M2.6 2.8 H9.9 M2.6 4.6 H9.9 M2.6 6.4 H7" stroke="#1c2939" stroke-width="0.8"/></svg>
<div class="abs" style="left:996.8px;top:535px;width:1px;height:30px;background:#5a6070"></div>
</body></html>
